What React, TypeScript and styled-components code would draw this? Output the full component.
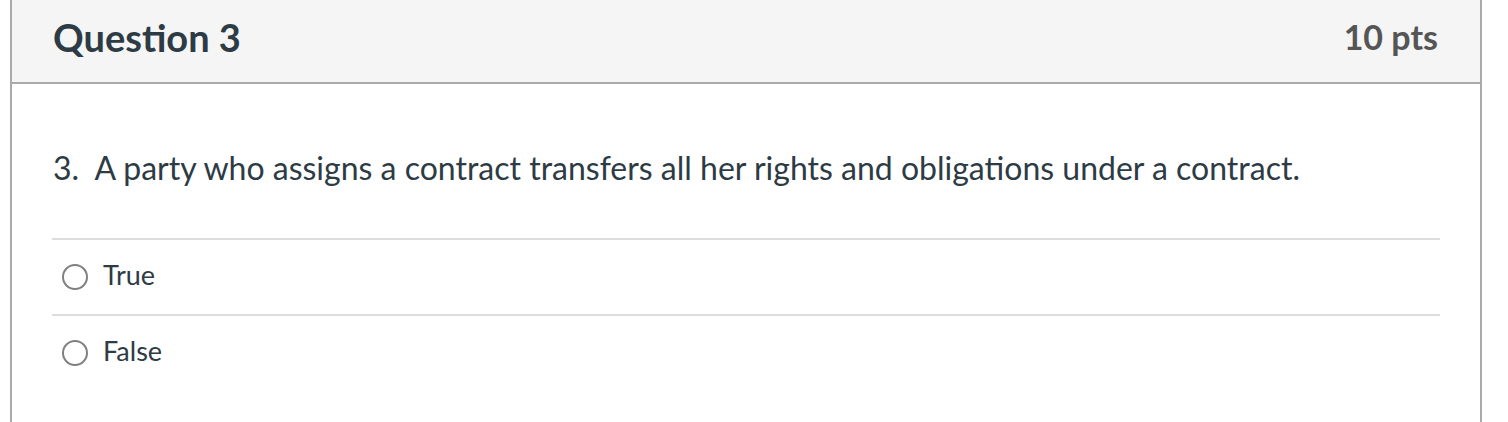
import React from "react";
import styled, { createGlobalStyle } from "styled-components";

const Global = createGlobalStyle`
  html, body { margin: 0; padding: 0; background: #fff; }
  body { font-family: Lato, "Open Sans", sans-serif; }
`;

const Page = styled.div`
  padding-left: 10px;
  width: 1472px;
`;

const Card = styled.section`
  border-left: 2px solid #aaaaaa;
  border-right: 2px solid #aaaaaa;
  height: 422px;
  box-sizing: border-box;
`;

const Header = styled.header`
  display: flex;
  align-items: center;
  justify-content: space-between;
  padding: 0 42px 8px 41px;
  height: 74px;
  background: #f5f5f5;
  border-bottom: 2px solid #aaaaaa;
`;

const Title = styled.h2`
  margin: 0;
  font-size: 38px;
  line-height: 44px;
  font-weight: 700;
  color: #2d3b45;
`;

const Points = styled.div`
  font-size: 34px;
  line-height: 44px;
  font-weight: 700;
  color: #555555;
`;

const Body = styled.div`
  padding: 64px 40px 0 40px;
`;

const Prompt = styled.p`
  margin: 0 0 0 1px;
  font-size: 32px;
  line-height: 40px;
  color: #2d3b45;
`;

const Answers = styled.div`
  margin-top: 50px;
  display: flex;
  flex-direction: column;
`;

const Answer = styled.label`
  display: flex;
  align-items: center;
  gap: 15px;
  height: 76px;
  box-sizing: border-box;
  padding-left: 10px;
  border-top: 2px solid #dddddd;
  font-size: 27px;
  color: #2d3b45;
`;

const AnswerText = styled.span`
  padding-bottom: 5px;
`;

const Radio = styled.span`
  width: 26px;
  height: 26px;
  border-radius: 50%;
  border: 2px solid #808080;
  box-sizing: border-box;
  flex: none;
`;

export default function App() {
  return (
    <>
      <Global />
      <Page>
        <Card>
          <Header>
            <Title>Question 3</Title>
            <Points>10 pts</Points>
          </Header>
          <Body>
            <Prompt>3.&nbsp; A party who assigns a contract transfers all her rights and obligations under a contract.</Prompt>
            <Answers>
              <Answer><Radio /><AnswerText>True</AnswerText></Answer>
              <Answer><Radio /><AnswerText>False</AnswerText></Answer>
            </Answers>
          </Body>
        </Card>
      </Page>
    </>
  );
}
